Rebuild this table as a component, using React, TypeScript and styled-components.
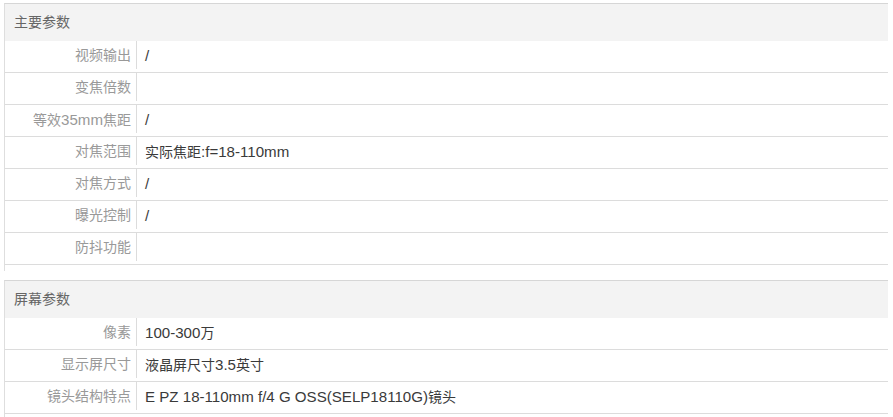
import styled, { createGlobalStyle } from "styled-components";

interface SpecRow {
  label: string;
  value: string;
}

interface SpecGroup {
  title: string;
  rows: SpecRow[];
}

const groups: SpecGroup[] = [
  {
    title: "主要参数",
    rows: [
      { label: "视频输出", value: "/" },
      { label: "变焦倍数", value: "" },
      { label: "等效35mm焦距", value: "/" },
      { label: "对焦范围", value: "实际焦距:f=18-110mm" },
      { label: "对焦方式", value: "/" },
      { label: "曝光控制", value: "/" },
      { label: "防抖功能", value: "" },
    ],
  },
  {
    title: "屏幕参数",
    rows: [
      { label: "像素", value: "100-300万" },
      { label: "显示屏尺寸", value: "液晶屏尺寸3.5英寸" },
      { label: "镜头结构特点", value: "E PZ 18-110mm f/4 G OSS(SELP18110G)镜头" },
    ],
  },
];

// latin runs render a bit wider than the CJK ones in the original page
function MixedText({ text }: { text: string }) {
  const parts = text.split(/([\x20-\x7E]+)/).filter((p) => p !== "");
  return (
    <>
      {parts.map((part, i) =>
        /^[\x20-\x7E]+$/.test(part) ? <LatinSld key={i}>{part}</LatinSld> : <span key={i}>{part}</span>
      )}
    </>
  );
}

export default function App() {
  return (
    <>
      <GlobalStyle />
      <PageSld>
        {groups.map((group) => (
          <GroupSld key={group.title}>
            <GroupTitleSld>{group.title}</GroupTitleSld>
            {group.rows.map((row) => (
              <RowSld key={row.label}>
                <LabelSld>
                  <MixedText text={row.label} />
                </LabelSld>
                <ValueSld>
                  <MixedText text={row.value} />
                </ValueSld>
              </RowSld>
            ))}
          </GroupSld>
        ))}
      </PageSld>
    </>
  );
}

const GlobalStyle = createGlobalStyle`
  html, body {
    margin: 0;
    padding: 0;
    overflow: hidden;
    background: #fff;
  }

  body {
    font-family: "Liberation Sans", Arial, "Noto Sans CJK SC", sans-serif;
    font-size: 14px;
  }
`;

const PageSld = styled.div`
  width: 884px;
  padding: 3px 0 0 4px;
`;

const GroupSld = styled.div`
  border-top: 1px solid #d6d6d6;
  border-left: 1px solid #dedede;
  padding-bottom: 6px;
  margin-bottom: 9px;
`;

const GroupTitleSld = styled.div`
  height: 37px;
  line-height: 37px;
  padding-left: 9px;
  background-color: #f3f3f3;
  color: #666;
`;

const RowSld = styled.div`
  display: flex;
  align-items: flex-start;
  height: 31px;
  border-bottom: 1px solid #dcdcdc;
`;

const LabelSld = styled.div`
  box-sizing: border-box;
  width: 132px;
  height: 28px;
  line-height: 29px;
  padding-right: 5px;
  border-right: 1px solid #dcdcdc;
  text-align: right;
  color: #999;
  white-space: nowrap;
`;

const ValueSld = styled.div`
  flex: 1;
  line-height: 29px;
  padding-left: 8px;
  color: #3a3a3a;
  white-space: nowrap;
`;

const LatinSld = styled.span`
  font-size: 15.1px;
`;
